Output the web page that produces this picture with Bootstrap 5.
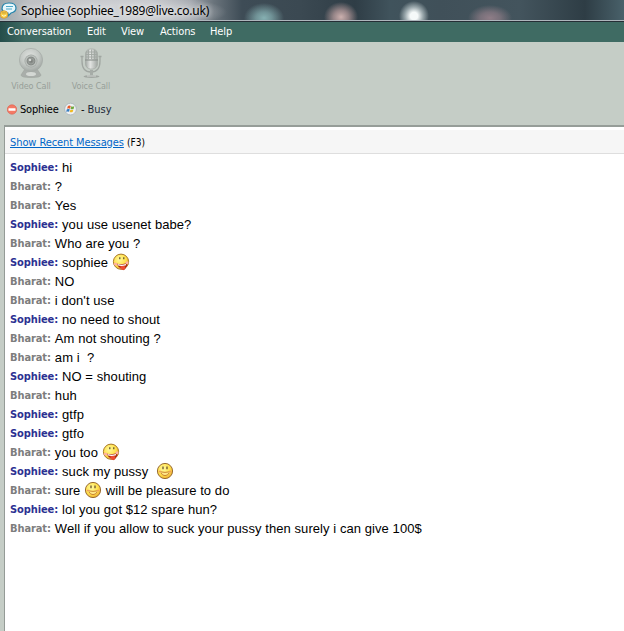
<!DOCTYPE html>
<html lang="en">
<head>
<meta charset="utf-8">
<meta name="viewport" content="width=device-width, initial-scale=1">
<title>Sophiee (sophiee_1989@live.co.uk)</title>
<link href="https://cdn.jsdelivr.net/npm/bootstrap@5.3.0/dist/css/bootstrap.min.css" rel="stylesheet">
<style>
html,body{height:100%;overflow:hidden}
body{background:#c5cdc6;color:#000;font:11px/14px "DejaVu Sans Condensed","DejaVu Sans",sans-serif}
.title-strip{height:22px;flex:none;border-bottom:1px solid #252e35;box-shadow:inset 0 -1px #aeb6bc;
background:
radial-gradient(ellipse 105px 18px at 122px 12px,rgba(208,210,213,.9) 40%,transparent 100%),
radial-gradient(ellipse 20px 15px at 264px 18px,#86b0b2 0,rgba(134,176,178,.7) 40%,transparent 100%),
radial-gradient(ellipse 17px 15px at 341px 17px,#ccb0ae 0,rgba(190,160,160,.7) 45%,transparent 100%),
radial-gradient(circle 15px at 414px 16px,#f5f9f9 25%,rgba(200,212,214,.65) 60%,transparent 100%),
radial-gradient(ellipse 22px 13px at 490px 18px,#8f7d87 0,rgba(143,125,135,.7) 45%,transparent 100%),
linear-gradient(90deg,#9ea8ac 0,#bfc1c4 30px,#c4c6ca 150px,#a1a5ac 190px,#69737b 214px,#3e4c56 242px,#3b4952 300px,#2f3d46 355px,#40535c 390px,#405059 440px,#43545d 520px,#2e3d45 585px,#49616a 624px)}
.title-text{font:12px/22px "Noto Sans","Open Sans",sans-serif;letter-spacing:-.24px;padding-left:3px;text-shadow:0 0 5px #fff}
.menu-strip{height:20px;flex:none;background:linear-gradient(90deg,#254d4a,#3f6b63 25px);color:#fff;line-height:20px;padding-left:7px}
.menu-strip span{flex:none;white-space:nowrap;letter-spacing:-.1px}
.m-conversation{width:80px}.m-edit{width:34px}.m-view{width:39px}.m-actions{width:50px}
.tools{height:53px;flex:none;padding:6px 0 0 1px;color:#979f99;font-size:9px;line-height:12px}
.tool{width:60px}
.tool span{letter-spacing:-.08px}
.tool svg{height:32px}
.status{height:30px;flex:none;padding:5px 0 0 7px;line-height:20px}
.display-name{margin:0 6px 0 3px;width:38px;letter-spacing:-.18px}
.presence{margin-left:4px;word-spacing:-.2px}
.busy{color:#222b3b}
.history{margin-left:4px;border-left:1px solid #949b96;border-top:2px solid #969d98;background:#fff;min-height:0}
.recent{height:27px;border-top:3px solid #fff;background:#f6f6f6;border-bottom:1px solid #dedede;padding-left:5px;line-height:25px}
.recent a{color:#0066c8;text-underline-offset:1px;letter-spacing:-.09px}
.key{font-size:10px}
.log{padding:4px 0 0 5px}
.msg{height:19px;line-height:19px;white-space:pre;font-family:"Liberation Sans",Arial,sans-serif;font-size:13px}
.who{font:bold 11px/20px "DejaVu Sans Condensed","DejaVu Sans",sans-serif;margin-right:4px;letter-spacing:-.1px}
.me{color:#7d7d7d}.her{color:#2c3192}
.said{display:block;letter-spacing:.07px}
.face{width:18px;height:18px;display:block}
</style>
<script src="https://cdn.jsdelivr.net/npm/bootstrap@5.3.0/dist/js/bootstrap.bundle.min.js"></script>
</head>
<body class="d-flex flex-column">
<svg width="0" height="0" class="position-absolute" aria-hidden="true">
<defs>
<radialGradient id="yg" cx=".4" cy=".35" r=".7"><stop offset="0" stop-color="#fffaa0"/><stop offset=".6" stop-color="#ffe14b"/><stop offset="1" stop-color="#eba832"/></radialGradient>
<linearGradient id="mg"><stop offset="0" stop-color="#a2a8a4"/><stop offset=".4" stop-color="#e2e4e2"/><stop offset="1" stop-color="#a0a6a2"/></linearGradient>
<radialGradient id="bg" cx=".45" cy=".35" r=".65"><stop offset="0" stop-color="#dfe2df"/><stop offset=".6" stop-color="#c4c9c5"/><stop offset="1" stop-color="#a1a7a3"/></radialGradient>
<radialGradient id="cg"><stop offset="0" stop-color="#717571"/><stop offset=".45" stop-color="#999e9a"/><stop offset=".6" stop-color="#858a86"/><stop offset=".75" stop-color="#c0c5c1"/><stop offset="1" stop-color="#9fa5a1"/></radialGradient>
<symbol id="smile" viewBox="0 0 18 18"><circle cx="9" cy="9" r="7.6" fill="url(#yg)" stroke="#9a6c30"/><path d="M7 4.5v2.7M11 4.5v2.7" stroke="#5c4323" stroke-width="1.2"/><path d="M4.3 9.8q4.7 1.2 9.4 0-.9 3.7-4.7 3.7T4.3 9.8Z" fill="#ffe789"/><path d="M4.3 9.8q4.7 1.2 9.4 0M5 11q1.2 2.6 4 2.6t4-2.6" fill="none" stroke="#c47a2c" stroke-width=".9"/><path d="M2.8 9.5h2M13.2 9.5h2" stroke="#f39a62" stroke-width="1.6"/></symbol>
<symbol id="tongue" viewBox="0 0 18 18"><circle cx="9" cy="8.7" r="7.6" fill="url(#yg)" stroke="#a9782b"/><path d="M7.8 4.3v2M11.8 4.3v2" stroke="#59482b" stroke-width="1.2"/><path d="M4 10.5q6 1.5 11.5-.5-.3 5-4 7.3Q6.5 15 4 10.5Z" fill="#a9220c"/><path d="M8 13.5q4-1.5 5.5.5-.5 3.5-3 3-2-.5-2.5-3.5Z" fill="#ed4d34"/><path d="M5.5 11.7q4 1.3 8.5 0" fill="none" stroke="#fff" stroke-width="1.3"/><circle cx="3.5" cy="11" r="1.6" fill="#ffb1a0"/><circle cx="15" cy="9.7" r="1.5" fill="#ffb1a0"/></symbol>
</defs></svg>
<header class="title-strip d-flex">
<svg width="18" height="22" viewBox="0 0 18 22"><path d="M2 9Q2 3 9 3q7 0 7 5 0 4-5 5l-3 3v-3Q3 13 2 9Z" fill="#e7f7fb" stroke="#2585ad" stroke-width="1.2"/><path d="M6 6.5h7M6 9h6" stroke="#4ca8c9"/><circle cx="4" cy="14.5" r="3.8" fill="#f9cf45" stroke="#d6942d" stroke-width=".8"/><path d="M1.8 15q2 2.5 4.4 0" fill="none" stroke="#fff9cf"/><path d="M3 12.3v1.2M5 12.3v1.2" stroke="#8d642c" stroke-width=".8"/></svg>
<span class="title-text text-nowrap">Sophiee (sophiee_1989@live.co.uk)</span>
</header>
<nav class="menu-strip d-flex">
<span class="m-conversation">Conversation</span><span class="m-edit">Edit</span><span class="m-view">View</span><span class="m-actions">Actions</span><span>Help</span>
</nav>
<div class="tools d-flex">
<div class="tool d-flex flex-column align-items-center"><svg width="30" viewBox="0 0 30 32"><path d="M9 21 5 27q0 2.5 10 2.5T25 27l-4-6Z" fill="#a9aeaa" stroke="#a0a6a1" stroke-width=".7"/><ellipse cx="15" cy="26" rx="5" ry="2" fill="#d4d8d4"/><circle cx="15" cy="12" r="11.6" fill="url(#bg)" stroke="#a5aba6" stroke-width=".7"/><circle cx="15" cy="13" r="6.5" fill="url(#cg)"/><circle cx="14" cy="12" r="1.3" fill="#d5d8d5"/></svg><span class="text-nowrap">Video Call</span></div>
<div class="tool d-flex flex-column align-items-center"><svg width="30" viewBox="0 0 30 32"><path d="M6 8v5q0 11 9 11t9-11V8M4.500 8.500h3M22.500 8.500h3" fill="none" stroke="#a0a6a1" stroke-width="1.3"/><rect x="9.500" y="1" width="12" height="20" rx="5" fill="url(#mg)" stroke="#a3a9a4" stroke-width=".7"/><path d="M10 4h11M10 6.500h11M10 9h11M12.500 2v9M15.500 1.500v9.500M18.500 2v9" stroke="#a2a8a3" stroke-width=".9"/><path d="M9 12h13" stroke="#8d948f" stroke-width="1.2"/><path d="M14 22h3v6h-3Z" fill="#a6aca7"/><ellipse cx="15.500" cy="28.500" rx="8" ry="1.500" fill="#a0a6a1"/><path d="M11 28h9" stroke="#dde0dd" stroke-width=".8"/></svg><span class="text-nowrap">Voice Call</span></div>
</div>
<div class="status d-flex">
<svg width="10" height="20" viewBox="0 0 10 20"><circle cx="5" cy="9.500" r="4.700" fill="#f47a65" stroke="#dc5d4c" stroke-width=".6"/><rect x="1.500" y="8.300" width="7" height="2.400" rx=".5" fill="#fff"/></svg>
<span class="display-name text-nowrap">Sophiee</span>
<svg width="13" height="20" viewBox="0 0 14 20"><circle cx="7" cy="9" r="6.300" fill="#eef0f2" stroke="#a5b0b6" stroke-width=".8"/><path d="M4.200 5.700q1.800-1 3.100 0L6.500 8.600q-1.700-.9-3.200 0Z" fill="#e95b29"/><path d="m7.900 6q1.500.8 3.200 0l-.8 2.900q-1.700.8-3.200 0Z" fill="#70a83c"/><path d="m3.100 9.300q1.600-.7 3.100 0l-.8 2.600q-1.500-.8-3.100 0Z" fill="#367dc0"/><path d="m6.900 9.600q1.500.7 3.200 0l-.8 2.600q-1.600.7-3.200 0Z" fill="#f1bb22"/></svg>
<span class="presence text-nowrap">- <span class="busy">Busy</span></span>
</div>
<main class="history flex-grow-1">
<div class="recent"><a href="#">Show Recent Messages</a> <span class="key">(F3)</span></div>
<div class="log">
<div class="msg d-flex"><span class="who her">Sophiee:</span><span class="said">hi</span></div>
<div class="msg d-flex"><span class="who me">Bharat:</span><span class="said">?</span></div>
<div class="msg d-flex"><span class="who me">Bharat:</span><span class="said">Yes</span></div>
<div class="msg d-flex"><span class="who her">Sophiee:</span><span class="said">you use usenet babe?</span></div>
<div class="msg d-flex"><span class="who me">Bharat:</span><span class="said">Who are you ?</span></div>
<div class="msg d-flex"><span class="who her">Sophiee:</span><span class="said">sophiee </span><svg class="face"><use href="#tongue"/></svg></div>
<div class="msg d-flex"><span class="who me">Bharat:</span><span class="said">NO</span></div>
<div class="msg d-flex"><span class="who me">Bharat:</span><span class="said">i don't use</span></div>
<div class="msg d-flex"><span class="who her">Sophiee:</span><span class="said">no need to shout</span></div>
<div class="msg d-flex"><span class="who me">Bharat:</span><span class="said">Am not shouting ?</span></div>
<div class="msg d-flex"><span class="who me">Bharat:</span><span class="said">am i  ?</span></div>
<div class="msg d-flex"><span class="who her">Sophiee:</span><span class="said">NO = shouting</span></div>
<div class="msg d-flex"><span class="who me">Bharat:</span><span class="said">huh</span></div>
<div class="msg d-flex"><span class="who her">Sophiee:</span><span class="said">gtfp</span></div>
<div class="msg d-flex"><span class="who her">Sophiee:</span><span class="said">gtfo</span></div>
<div class="msg d-flex"><span class="who me">Bharat:</span><span class="said">you too </span><svg class="face"><use href="#tongue"/></svg></div>
<div class="msg d-flex"><span class="who her">Sophiee:</span><span class="said">suck my pussy </span><svg class="face ms-1"><use href="#smile"/></svg></div>
<div class="msg d-flex"><span class="who me">Bharat:</span><span class="said">sure </span><svg class="face"><use href="#smile"/></svg><span class="said"> will be pleasure to do</span></div>
<div class="msg d-flex"><span class="who her">Sophiee:</span><span class="said">lol you got $12 spare hun?</span></div>
<div class="msg d-flex"><span class="who me">Bharat:</span><span class="said">Well if you allow to suck your pussy then surely i can give 100$</span></div>
</div>
</main>
</body>
</html>
